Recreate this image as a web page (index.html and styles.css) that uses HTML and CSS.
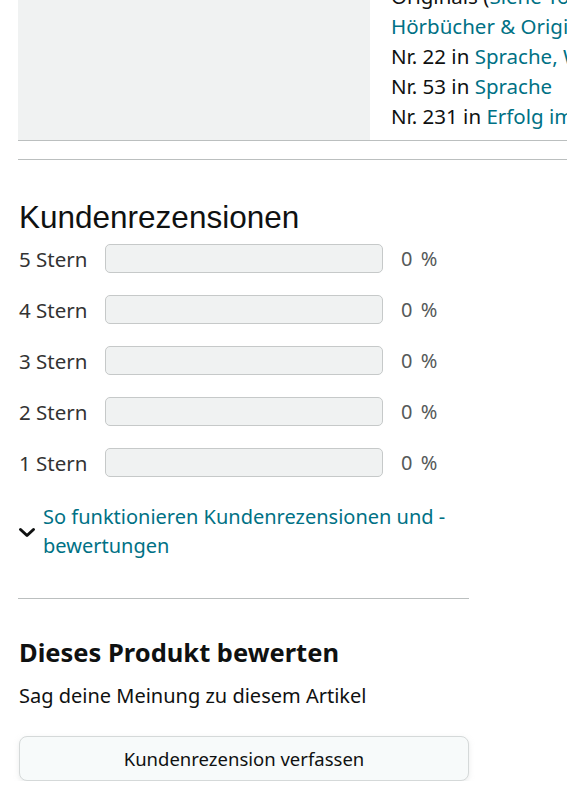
FILE: index.html
```html
<!DOCTYPE html>
<html>
  <head>
    <title>Kundenrezensionen</title>
    <link rel="stylesheet" href="styles.css">
  </head>
  <body>
    <div class="page">
      <div class="product">
        <div class="product-image"></div>
        <div class="ranks">
          <div>Originals (<a href="#">Siehe Top 100 in Audible Hörbücher</a>)</div>
          <div><a href="#">Hörbücher &amp; Originals</a></div>
          <div>Nr. 22 in <a href="#">Sprache, Wortschatz &amp; Grammatik</a></div>
          <div>Nr. 53 in <a href="#">Sprache</a></div>
          <div>Nr. 231 in <a href="#">Erfolg im Beruf</a></div>
        </div>
      </div>
      <hr class="rule">

      <div class="reviews">
        <h2>Kundenrezensionen</h2>
        <table class="histogram">
          <tr>
            <td class="stars">5 Stern</td>
            <td><div class="bar"></div></td>
            <td class="pct">0 %</td>
          </tr>
          <tr>
            <td class="stars">4 Stern</td>
            <td><div class="bar"></div></td>
            <td class="pct">0 %</td>
          </tr>
          <tr>
            <td class="stars">3 Stern</td>
            <td><div class="bar"></div></td>
            <td class="pct">0 %</td>
          </tr>
          <tr>
            <td class="stars">2 Stern</td>
            <td><div class="bar"></div></td>
            <td class="pct">0 %</td>
          </tr>
          <tr>
            <td class="stars">1 Stern</td>
            <td><div class="bar"></div></td>
            <td class="pct">0 %</td>
          </tr>
        </table>

        <a class="expander" href="#">
          <svg class="chevron" width="18" height="11" viewBox="0 0 18 11">
            <path d="M2.5 2.5 L9 8.5 L15.5 2.5" fill="none" stroke="#0f1111" stroke-width="3" stroke-linecap="round" stroke-linejoin="round" />
          </svg>
          <span>So funktionieren Kundenrezensionen und -bewertungen</span>
        </a>

        <hr class="rule short">

        <h3>Dieses Produkt bewerten</h3>
        <p class="hint">Sag deine Meinung zu diesem Artikel</p>
        <button class="write-review" type="button">Kundenrezension verfassen</button>
      </div>
    </div>
  </body>
</html>
```

FILE: styles.css
```css
/* product detail - reviews block */
body {
  font-family: "Noto Sans", Arial, sans-serif;
  color: #0f1111;
  margin: 0;
  overflow: hidden;
}

a {
  color: #007185;
  text-decoration: none;
}

.page {
  padding-left: 18px;
}

/* page is scrolled, so the top row is cut off */
.product {
  display: flex;
  margin-top: -19px;
  border-bottom: 1px solid #bbbfbf;
}

.product-image {
  flex: 0 0 352px;
  height: 159px;
  background-color: #f0f2f2;
}

.ranks {
  padding-left: 21px;
  font-size: 20.5px;
  line-height: 30px;
  white-space: nowrap;
}

.rule {
  border: 0;
  border-top: 1px solid #bbbfbf;
  margin: 18px 0 0;
}

.rule.short {
  width: 451px;
  margin: 38px 0 0;
}

.reviews {
  width: 451px;
}

h2 {
  font-family: "Liberation Sans", Arial, sans-serif;
  font-weight: normal;
  font-size: 31.5px;
  line-height: 36px;
  margin: 39px 0 0 1px;
  color: #0f1111;
}

.histogram {
  border-collapse: collapse;
  margin-top: -2px;
  margin-left: 1px;
}

.histogram td {
  padding: 0;
  height: 51px;
  vertical-align: middle;
}

.stars {
  width: 86px;
  font-size: 20.5px;
  color: #333;
}

.bar {
  width: 276px;
  height: 27px;
  border: 1px solid #c6c9c9;
  border-radius: 5px;
  background-color: #f0f2f2;
}

.pct {
  padding-left: 18px !important;
  font-size: 20px;
  word-spacing: 3px;
  color: #565959;
}

.expander {
  display: flex;
  align-items: center;
  gap: 7px;
  margin-top: 14px;
  font-size: 20px;
  line-height: 29px;
}

.chevron {
  flex: 0 0 18px;
  margin-top: 2px;
}

h3 {
  font-size: 25.5px;
  font-weight: bold;
  margin: 37px 0 0 1px;
  line-height: 32px;
}

.hint {
  font-size: 20px;
  margin: 15px 0 0 1px;
  line-height: 26px;
}

.write-review {
  display: block;
  width: 450px;
  height: 45px;
  margin: 27px 0 0 1px;
  font-family: "Noto Sans", Arial, sans-serif;
  font-size: 18.5px;
  color: #0f1111;
  background-color: #f7fafa;
  border: 1px solid #d5d9d9;
  border-radius: 8px;
  box-shadow: 0 2px 5px rgba(213, 217, 217, 0.5);
}
```
